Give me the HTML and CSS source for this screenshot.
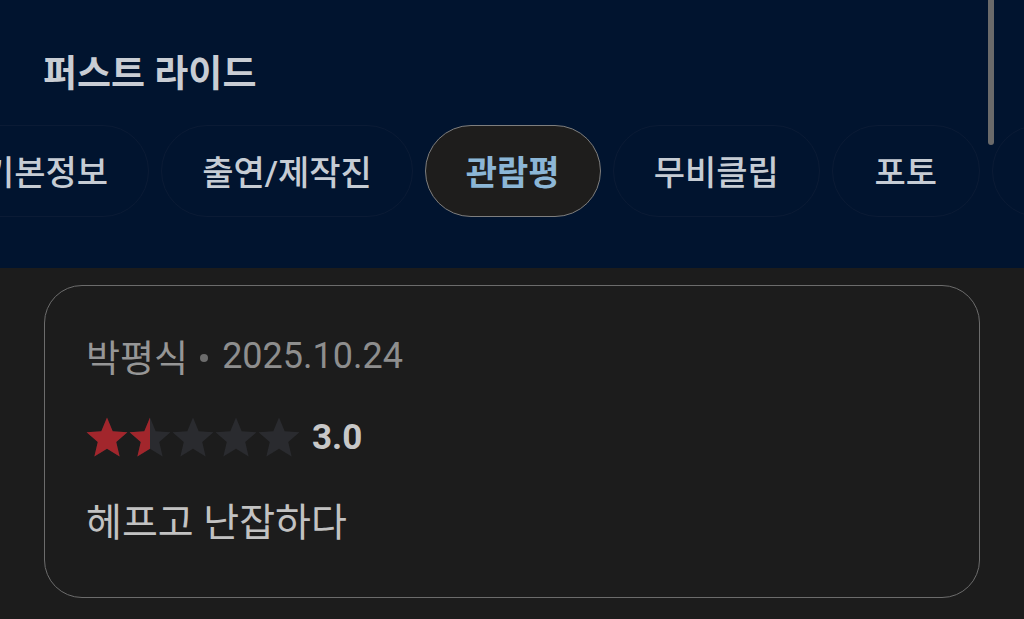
FILE: index.html
```html
<!DOCTYPE html>
<html lang="ko">
<head>
    <meta charset="UTF-8">
    <meta name="viewport" content="width=device-width, initial-scale=1.0">
    <title>퍼스트 라이드 - 관람평</title>
    <link rel="stylesheet" href="styles.css">
</head>
<body>
    <header class="movie-header">
        <h1 class="movie-title">퍼스트 라이드</h1>
        <nav class="tabs">
            <a class="tab">기본정보</a>
            <a class="tab">출연/제작진</a>
            <a class="tab active">관람평</a>
            <a class="tab">무비클립</a>
            <a class="tab">포토</a>
            <a class="tab"></a>
        </nav>
        <div class="scrollbar"></div>
    </header>
    <main class="reviews">
        <article class="review-card">
            <div class="review-meta">
                <span class="author">박평식</span>
                <span class="dot"></span>
                <span class="date">2025.10.24</span>
            </div>
            <div class="rating">
                <svg class="stars" width="214" height="40" viewBox="0 0 214 40">
                    <defs>
                        <path id="star" d="M21 0.5L26.7 14.15L41.45 15.36L30.23 25L33.64 39.39L21 31.7L8.36 39.39L11.77 25L0.55 15.36L15.3 14.15Z"/>
                        <clipPath id="half"><rect x="0" y="0" width="64" height="40"/></clipPath>
                    </defs>
                    <g fill="#2a2b2f">
                        <use href="#star" x="0"/>
                        <use href="#star" x="43"/>
                        <use href="#star" x="86"/>
                        <use href="#star" x="129"/>
                        <use href="#star" x="172"/>
                    </g>
                    <use href="#star" x="0" fill="#a2262c"/>
                    <g clip-path="url(#half)" fill="#a2262c">
                        <use href="#star" x="43"/>
                    </g>
                </svg>
                <span class="score">3.0</span>
            </div>
            <p class="review-text">헤프고 난잡하다</p>
        </article>
    </main>
</body>
</html>
```

FILE: styles.css
```css
body {
    margin: 0;
    background-color: #1c1c1c;
    font-family: Roboto, "Noto Sans CJK KR", sans-serif;
    overflow: hidden;
}
.movie-header {
    position: relative;
    background-color: #01142f;
    padding: 55px 0 51px;
    overflow: hidden;
}
.movie-title {
    margin: 0 0 30px;
    padding-left: 43px;
    font-size: 37px;
    line-height: 40px;
    font-weight: 700;
    color: #c9cdd4;
}
.tabs {
    display: flex;
    gap: 12px;
    margin-left: -58px;
    white-space: nowrap;
}
.tab {
    flex: none;
    display: flex;
    align-items: center;
    justify-content: center;
    box-sizing: border-box;
    min-width: 148px;
    height: 92px;
    padding: 0 40px 2px;
    border: 1px solid #0b1b35;
    border-radius: 46px;
    font-size: 34px;
    font-weight: 500;
    color: #c6ccd4;
}
.tab.active {
    background-color: #1e1d1c;
    border-color: #7e7e7e;
    color: #8cb6d6;
    font-weight: 700;
}
.scrollbar {
    position: absolute;
    top: 0;
    left: 988px;
    width: 6px;
    height: 145px;
    background-color: #6a6a6a;
    border-radius: 0 0 3px 3px;
}
.reviews {
    padding: 17px 44px;
}
.review-card {
    box-sizing: border-box;
    width: 936px;
    border: 1px solid #6c6c6c;
    border-radius: 38px;
    padding: 48px 0 52px 41px;
}
.review-meta {
    display: flex;
    align-items: center;
    height: 44px;
    color: #969696;
}
.author {
    font-size: 37px;
}
.dot {
    width: 8px;
    height: 8px;
    margin: 4px 14px 0 12px;
    border-radius: 50%;
    background-color: #6c6c6c;
}
.date {
    font-size: 36px;
    color: #8e8e8e;
}
.rating {
    display: flex;
    align-items: center;
    height: 44px;
    margin-top: 37px;
}
.stars {
    display: block;
}
.score {
    margin-left: 12px;
    font-size: 35px;
    font-weight: 700;
    color: #c8c8c8;
}
.review-text {
    margin: 42px 0 0;
    font-size: 39px;
    line-height: 44px;
    color: #c2c2c2;
}
```
